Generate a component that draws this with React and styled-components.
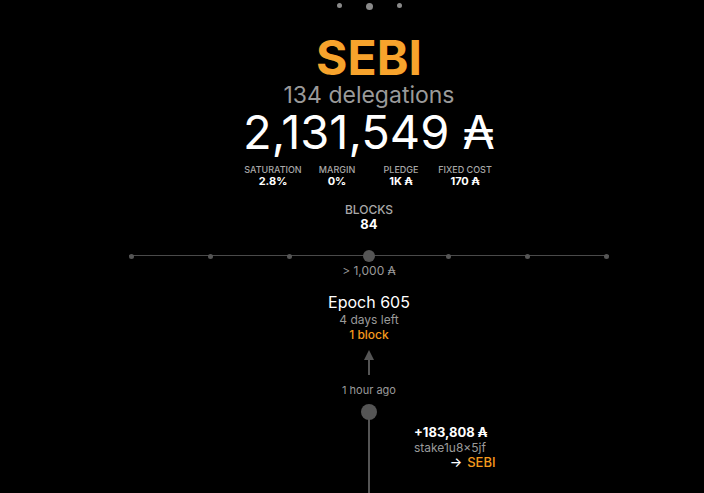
import React from 'react';
import styled, { createGlobalStyle } from 'styled-components';

const GlobalStyle = createGlobalStyle`
  html, body {
    margin: 0;
    padding: 0;
    background: #000000;
    height: 100%;
    overflow: hidden;
  }
  body {
    font-family: Inter, "Noto Sans", "DejaVu Sans", sans-serif;
    color: #ffffff;
  }
`;

const Page = styled.div`
  height: 493px;
  padding-left: 34px;
  display: flex;
  flex-direction: column;
  align-items: center;
  text-align: center;
  overflow: hidden;
`;

const Pager = styled.div`
  display: flex;
  align-items: flex-start;
  gap: 24px;
  height: 12px;
  padding-top: 3px;
`;

const PagerDot = styled.span`
  width: ${(p) => (p.$active ? 7 : 5)}px;
  height: ${(p) => (p.$active ? 7 : 5)}px;
  border-radius: 50%;
  background: #8a8a8a;
`;

const PoolName = styled.div`
  margin-top: 19px;
  font-size: 48px;
  line-height: 48px;
  font-weight: 700;
  color: #f7a32c;
`;

const Delegations = styled.div`
  margin-top: 1px;
  font-size: 23px;
  line-height: 24px;
  color: #9a9a9a;
`;

const Stake = styled.div`
  font-size: 47px;
  line-height: 50px;
  font-weight: 400;
`;

const Stats = styled.div`
  display: grid;
  grid-template-columns: repeat(4, 64px);
  margin-top: 7px;
`;

const Stat = styled.div`
  display: flex;
  flex-direction: column;
  align-items: center;
`;

const Label = styled.div`
  font-size: ${(p) => p.$size || 9}px;
  line-height: ${(p) => (p.$size ? p.$size + 2 : 11)}px;
  font-weight: 500;
  color: #a8a8a8;
  text-transform: uppercase;
`;

const Value = styled.div`
  font-size: ${(p) => p.$size || 11}px;
  line-height: ${(p) => (p.$size ? p.$size + 1 : 13)}px;
  font-weight: 700;
  color: #ffffff;
`;

const Blocks = styled(Stat)`
  margin-top: 15px;
`;

const Track = styled.div`
  position: relative;
  width: 480px;
  height: 12px;
  margin-top: 19px;
  display: flex;
  align-items: center;
  justify-content: space-between;
  &::before {
    content: '';
    position: absolute;
    left: 0;
    right: 0;
    top: 5px;
    height: 1px;
    background: #4a4a4a;
  }
`;

const Tick = styled.span`
  position: relative;
  width: ${(p) => (p.$active ? 12 : 5)}px;
  height: ${(p) => (p.$active ? 12 : 5)}px;
  margin: 0 ${(p) => (p.$active ? -3.5 : 0)}px;
  border-radius: 50%;
  background: #555555;
`;

const Threshold = styled.div`
  margin-top: 1px;
  font-size: 12px;
  line-height: 16px;
  color: #9a9a9a;
`;

const Epoch = styled.div`
  margin-top: 13px;
  font-size: 16px;
  line-height: 20px;
  font-weight: 400;
`;

const Muted = styled.div`
  font-size: ${(p) => p.$size || 12}px;
  line-height: 15px;
  color: #9a9a9a;
`;

const Accent = styled.div`
  font-size: 12px;
  line-height: 15px;
  font-weight: 500;
  color: #f59a1d;
`;

const Arrow = styled.div`
  margin-top: 8px;
  display: flex;
  flex-direction: column;
  align-items: center;
  &::before {
    content: '';
    border-left: 5px solid transparent;
    border-right: 5px solid transparent;
    border-bottom: 10px solid #555555;
  }
  &::after {
    content: '';
    width: 2px;
    height: 15px;
    background: #555555;
  }
`;

const Ago = styled(Muted)`
  margin-top: 8px;
`;

const Timeline = styled.div`
  margin-top: 6px;
  flex: 1;
  display: grid;
  grid-template-columns: 1fr 16px 1fr;
  width: 300px;
`;

const Rail = styled.div`
  grid-column: 2;
  display: flex;
  flex-direction: column;
  align-items: center;
  &::before {
    content: '';
    width: 16px;
    height: 16px;
    border-radius: 50%;
    background: #555555;
    flex-shrink: 0;
  }
  &::after {
    content: '';
    width: 2px;
    flex: 1;
    margin-top: -8px;
    background: #555555;
  }
`;

const Tx = styled.div`
  grid-column: 3;
  justify-self: start;
  margin: 21px 0 0 37px;
  display: flex;
  flex-direction: column;
  align-items: flex-start;
`;

const TxAmount = styled.div`
  font-size: 13px;
  line-height: 15px;
  font-weight: 700;
`;

const TxTarget = styled.div`
  align-self: flex-end;
  margin-top: -1px;
  margin-right: -8px;
  font-size: 13px;
  line-height: 16px;
  font-weight: 500;
  color: #f59a1d;
  span {
    color: #ffffff;
    margin-right: 5px;
  }
`;

const stats = [
  { label: 'Saturation', value: '2.8%' },
  { label: 'Margin', value: '0%' },
  { label: 'Pledge', value: '1K ₳' },
  { label: 'Fixed cost', value: '170 ₳' },
];

export default function App() {
  return (
    <>
      <GlobalStyle />
      <Page>
        <Pager>
          <PagerDot />
          <PagerDot $active />
          <PagerDot />
        </Pager>
        <PoolName>SEBI</PoolName>
        <Delegations>134 delegations</Delegations>
        <Stake>2,131,549 ₳</Stake>
        <Stats>
          {stats.map((s) => (
            <Stat key={s.label}>
              <Label>{s.label}</Label>
              <Value>{s.value}</Value>
            </Stat>
          ))}
        </Stats>
        <Blocks>
          <Label $size={12}>Blocks</Label>
          <Value $size={13}>84</Value>
        </Blocks>
        <Track>
          {[0, 1, 2, 3, 4, 5, 6].map((i) => (
            <Tick key={i} $active={i === 3} />
          ))}
        </Track>
        <Threshold>&gt; 1,000 ₳</Threshold>
        <Epoch>Epoch 605</Epoch>
        <Muted>4 days left</Muted>
        <Accent>1 block</Accent>
        <Arrow />
        <Ago $size={11}>1 hour ago</Ago>
        <Timeline>
          <Rail />
          <Tx>
            <TxAmount>+183,808 ₳</TxAmount>
            <Muted>stake1u8×5jf</Muted>
            <TxTarget>
              <span>→</span>SEBI
            </TxTarget>
          </Tx>
        </Timeline>
      </Page>
    </>
  );
}
